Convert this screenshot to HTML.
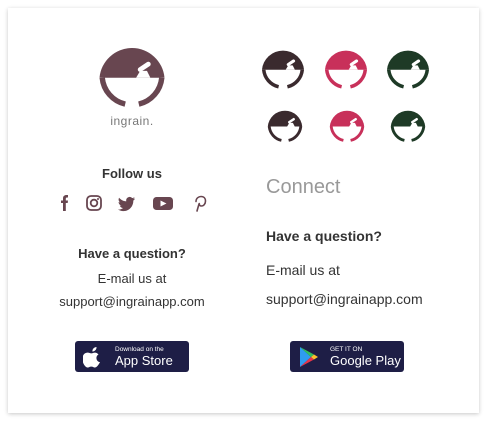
<!DOCTYPE html>
<html><head><meta charset="utf-8"><style>
*{margin:0;padding:0;box-sizing:border-box}
body{width:488px;height:424px;background:#fff;font-family:"Liberation Sans",sans-serif;position:relative;overflow:hidden}
.card{position:absolute;left:8px;top:8px;width:471px;height:405px;background:#fff;box-shadow:0 1px 4px rgba(0,0,0,.22)}
.t{position:absolute;white-space:nowrap}
.c{text-align:center;width:200px;left:32px}
.btn{position:absolute;width:114px;height:31px;background:#1e1e46;border-radius:3px;color:#fff}
</style></head><body>
<svg width="0" height="0" style="position:absolute">
<defs>
<symbol id="logo" viewBox="-50 -50 100 100">
<path d="M-47.8,4 A48 48 0 0 1 47.8 4 Z" fill="currentColor"/>
<path d="M43.8,4 A44 44 0 0 1 10 42.8 M-10 42.8 A44 44 0 0 1 -43.8 4" fill="none" stroke="currentColor" stroke-width="8"/>
<line x1="12" y1="-8" x2="24" y2="-16" stroke="#fff" stroke-width="7" stroke-linecap="round"/>
<path d="M6 4 L12 -6 L22 -6 L27 4 Z" fill="#fff"/>
</symbol>
</defs></svg>
<div class="card"></div>
<svg style="position:absolute;left:98px;top:41px" width="68" height="68" color="#684650"><use href="#logo"/></svg>
<div class="t c" style="top:114px;font-size:12px;color:#777;letter-spacing:.5px">ingrain.</div>
<div class="t c" style="top:166px;font-size:13px;color:#333;font-weight:bold">Follow us</div>
<svg style="position:absolute;left:55px;top:193px" width="155" height="20" fill="#684650">
<path d="M8 18 V10 H6 V7.5 H8 V5.5 C8 3 9.5 2 11.5 2 H13 V4.5 H12 C11 4.5 10.8 5 10.8 6 V7.5 H13 L12.7 10 H10.8 V18 Z"/>
<rect x="32" y="3" width="14" height="14" rx="4" fill="none" stroke="#684650" stroke-width="1.8"/>
<circle cx="39" cy="10" r="3.3" fill="none" stroke="#684650" stroke-width="1.8"/>
<circle cx="43" cy="6" r="1"/>
<path d="M80 5.5c-.6.3-1.3.5-2 .6.7-.4 1.3-1.1 1.5-1.9-.7.4-1.4.7-2.2.9a3.5 3.5 0 0 0-6 3.2c-2.9-.1-5.5-1.5-7.2-3.6-1 1.6-.5 3.6 1.1 4.7-.6 0-1.1-.2-1.6-.4 0 1.7 1.2 3.2 2.8 3.5-.5.1-1.1.2-1.6.1.5 1.4 1.8 2.4 3.3 2.4-1.5 1.2-3.4 1.8-5.2 1.5 1.6 1 3.4 1.6 5.4 1.6 6.5 0 10.2-5.5 10-10.5.7-.5 1.3-1.1 1.7-1.8z"/>
<rect x="98" y="4" width="20" height="13" rx="3.5"/>
<path d="M105.5 7.5 L111.5 10.5 L105.5 13.5Z" fill="#fff"/>
<path d="M142 18 L144 11 M141 8.5 C141 5 144 3.5 146 3.5 C149 3.5 150.5 5.5 150.5 8 C150.5 11 148.5 13 146.5 13 C145 13 144 12 144.3 10.5" fill="none" stroke="#684650" stroke-width="1.6" stroke-linecap="round"/>
</svg>
<div class="t c" style="top:246px;font-size:13px;color:#333;font-weight:bold">Have a question?</div>
<div class="t c" style="top:271px;font-size:13px;color:#333">E-mail us at</div>
<div class="t c" style="top:294px;font-size:13px;color:#333">support@ingrainapp.com</div>

<svg style="position:absolute;left:261px;top:46px" width="44" height="44" color="#3a2a2e"><use href="#logo"/></svg>
<svg style="position:absolute;left:324px;top:46px" width="44" height="44" color="#c8305a"><use href="#logo"/></svg>
<svg style="position:absolute;left:386px;top:46px" width="44" height="44" color="#1e3a26"><use href="#logo"/></svg>
<svg style="position:absolute;left:267px;top:107px" width="36" height="36" color="#3a2a2e"><use href="#logo"/></svg>
<svg style="position:absolute;left:329px;top:107px" width="36" height="36" color="#c8305a"><use href="#logo"/></svg>
<svg style="position:absolute;left:390px;top:107px" width="36" height="36" color="#1e3a26"><use href="#logo"/></svg>

<div class="t" style="left:266px;top:176px;font-size:20px;color:#999">Connect</div>
<div class="t" style="left:266px;top:228px;font-size:14px;color:#333;font-weight:bold">Have a question?</div>
<div class="t" style="left:266px;top:262px;font-size:14px;color:#333">E-mail us at</div>
<div class="t" style="left:266px;top:291px;font-size:14px;color:#333">support@ingrainapp.com</div>

<div class="btn" style="left:75px;top:341px">
<svg style="position:absolute;left:8px;top:5px" width="20" height="22" viewBox="0 0 20 22" fill="#fff"><path d="M13.5 1c.1 1.3-.4 2.5-1.2 3.3-.8.9-1.9 1.3-2.9 1.2-.1-1.2.4-2.4 1.2-3.2.8-.8 2-1.3 2.9-1.3zM17 16c-.5 1.1-.8 1.6-1.4 2.5-.9 1.3-2.2 3-3.7 3-1.4 0-1.7-.9-3.6-.9s-2.2.9-3.6.9c-1.5 0-2.7-1.5-3.6-2.8C-1.3 15 -.9 9.3 1.6 7.6c1-.7 2.2-1 3.3-1 1.3 0 2.2.8 3.5.8 1.2 0 1.9-.8 3.6-.8 1.3 0 2.6.7 3.5 1.9-3.1 1.7-2.6 6.1.5 7.5z"/></svg>
<div class="t" style="left:40px;top:5px;font-size:6.5px">Download on the</div>
<div class="t" style="left:40px;top:12px;font-size:13px">App Store</div>
</div>
<div class="btn" style="left:290px;top:341px">
<svg style="position:absolute;left:9px;top:5px" width="20" height="22" viewBox="0 0 20 22"><path d="M1 1 L12 11 L1 21Z" fill="#2f9cf0"/><path d="M1 1 L15 8.5 L12 11Z" fill="#30c060"/><path d="M1 21 L15 13.5 L12 11Z" fill="#e8354a"/><path d="M15 8.5 L19 11 L15 13.5 L12 11Z" fill="#fbc02d"/></svg>
<div class="t" style="left:40px;top:5px;font-size:6.5px">GET IT ON</div>
<div class="t" style="left:40px;top:12px;font-size:13px">Google Play</div>
</div>
</body></html>
